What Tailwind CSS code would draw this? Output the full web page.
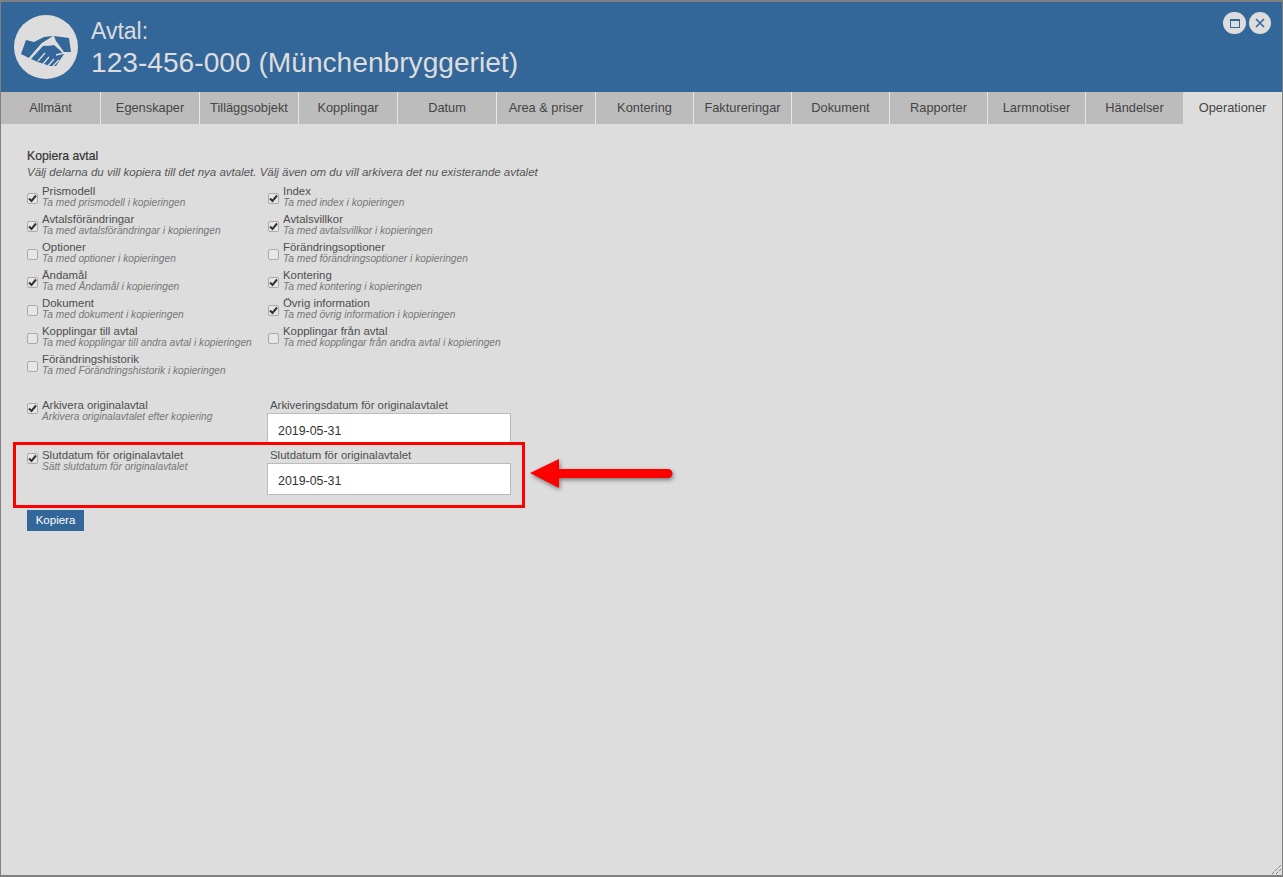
<!DOCTYPE html>
<html lang="en">
  <head>
    <meta charset="UTF-8" />
    <title>Avtal</title>
    <script src="https://cdn.jsdelivr.net/npm/@tailwindcss/browser@4"></script>
  </head>
  <body class="h-[877px] w-[1283px] overflow-hidden bg-[#dddddd] font-['Liberation_Sans',Arial,sans-serif]">
    <div class="relative flex h-[877px] flex-col border-x border-t-2 border-b-2 border-[#808080]">
      <!-- header -->
      <header class="relative flex h-[90px] shrink-0 items-start bg-[#336699] pl-[13px] pt-[13px]">
        <div class="flex h-[64px] w-[64px] items-center justify-center rounded-full bg-[#dddddd]">
          <svg viewBox="0 0 64 44" class="mt-[6px] h-[44px] w-[64px]" fill="#336699">
            <path d="M7 26 L12 12 L20 14 L30 9 L39 8 L28 15 L15 30 Z" />
            <path d="M40 8 L55 10 L57 24 L50 24 L42 13 Z" />
            <path d="M17 31 L29 18 L40 17 L50 26 L46 32 L42 38 L36 38 L30 36 L24 34 Z" />
            <path d="M15 31 L28 16 L38 11 L43 16 L33 17" fill="none" stroke="#dddddd" stroke-width="1.5" />
            <path d="M24 33 L31 25 M29 36 L35 29 M34 38 L40 31 M39 38 L45 32" fill="none" stroke="#dddddd" stroke-width="1.3" />
            <path d="M42 27 L50 25" fill="none" stroke="#dddddd" stroke-width="1.3" />
          </svg>
        </div>
        <div class="ml-[13px] text-[#dddddd]">
          <div class="mt-[3px] text-[23px] leading-[27px]">Avtal:</div>
          <div class="text-[28.15px] leading-[35px]">123-456-000 (Münchenbryggeriet)</div>
        </div>
        <div class="absolute right-[11px] top-[10px] flex gap-[3px]">
          <button class="flex h-[22px] w-[23px] items-center justify-center rounded-full bg-[#dddddd]">
            <span class="h-[9px] w-[10px] border border-t-2 border-[#336699]"></span>
          </button>
          <button class="flex h-[22px] w-[22px] items-center justify-center rounded-full bg-[#dddddd]">
            <svg viewBox="0 0 10 10" class="h-[10px] w-[10px]" stroke="#336699" stroke-width="1.6"><path d="M1 1 L9 9 M9 1 L1 9" /></svg>
          </button>
        </div>
      </header>

      <!-- tabs -->
      <nav class="flex h-[32px] shrink-0 text-[12.8px] text-[#444]">
        <a class="flex w-[100px] items-center justify-center border-r border-[#e8e8e8] bg-[#bcbcbc]">Allmänt</a>
        <a class="flex w-[99px] items-center justify-center border-r border-[#e8e8e8] bg-[#bcbcbc]">Egenskaper</a>
        <a class="flex w-[99px] items-center justify-center border-r border-[#e8e8e8] bg-[#bcbcbc]">Tilläggsobjekt</a>
        <a class="flex w-[99px] items-center justify-center border-r border-[#e8e8e8] bg-[#bcbcbc]">Kopplingar</a>
        <a class="flex w-[99px] items-center justify-center border-r border-[#e8e8e8] bg-[#bcbcbc]">Datum</a>
        <a class="flex w-[99px] items-center justify-center border-r border-[#e8e8e8] bg-[#bcbcbc]">Area &amp; priser</a>
        <a class="flex w-[98px] items-center justify-center border-r border-[#e8e8e8] bg-[#bcbcbc]">Kontering</a>
        <a class="flex w-[98px] items-center justify-center border-r border-[#e8e8e8] bg-[#bcbcbc]">Faktureringar</a>
        <a class="flex w-[98px] items-center justify-center border-r border-[#e8e8e8] bg-[#bcbcbc]">Dokument</a>
        <a class="flex w-[98px] items-center justify-center border-r border-[#e8e8e8] bg-[#bcbcbc]">Rapporter</a>
        <a class="flex w-[98px] items-center justify-center border-r border-[#e8e8e8] bg-[#bcbcbc]">Larmnotiser</a>
        <a class="flex w-[97px] items-center justify-center bg-[#bcbcbc]">Händelser</a>
        <a class="flex flex-1 items-center justify-center bg-[#dddddd]">Operationer</a>
      </nav>

      <!-- content -->
      <main class="flex-1 pl-[26px] pt-[25px] text-[#4d4d4d]">
        <h2 class="text-[12.2px] leading-[14px] font-medium text-[#333] [-webkit-text-stroke:0.2px_#333]">Kopiera avtal</h2>
        <p class="mt-[2px] text-[11.5px] leading-[14px] italic text-[#555]">Välj delarna du vill kopiera till det nya avtalet. Välj även om du vill arkivera det nu existerande avtalet</p>

        <div id="options" class="mt-[3px] grid grid-cols-[241px_1fr] auto-rows-[28px]"></div>

        <div class="mt-[16px] grid grid-cols-[240px_244px] auto-rows-[50px]">
          <label class="flex items-start pt-[6px]">
            <span class="relative mr-[4px] mt-[3px] flex h-[11px] w-[11px] shrink-0">
              <input type="checkbox" checked class="peer h-[11px] w-[11px] appearance-none rounded-[2px] border border-[#aaa] bg-[#e6e6e6]" />
              <svg class="absolute left-[1px] top-[1px] hidden peer-checked:block" width="9" height="9" viewBox="0 0 9 9" fill="none" stroke="#333" stroke-width="2"><path d="M1 4.5 L3.5 7 L8 1.5" /></svg>
            </span>
            <span class="block"><span class="block text-[11.4px] leading-[11px]">Arkivera originalavtal</span><span class="block text-[10.2px] leading-[11px] italic text-[#777]">Arkivera originalavtalet efter kopiering</span></span>
          </label>
          <div class="pt-[6px]">
            <div class="pl-[3px] text-[11.4px] leading-[11px]">Arkiveringsdatum för originalavtalet</div>
            <input value="2019-05-31" class="mt-[2px] h-[32px] w-full border border-[#bbb] bg-white px-[10px] pt-[3px] text-[12.4px] text-[#333]" />
          </div>
          <label class="flex items-start pt-[6px]">
            <span class="relative mr-[4px] mt-[3px] flex h-[11px] w-[11px] shrink-0">
              <input type="checkbox" checked class="peer h-[11px] w-[11px] appearance-none rounded-[2px] border border-[#aaa] bg-[#e6e6e6]" />
              <svg class="absolute left-[1px] top-[1px] hidden peer-checked:block" width="9" height="9" viewBox="0 0 9 9" fill="none" stroke="#333" stroke-width="2"><path d="M1 4.5 L3.5 7 L8 1.5" /></svg>
            </span>
            <span class="block"><span class="block text-[11.4px] leading-[11px]">Slutdatum för originalavtalet</span><span class="block text-[10.2px] leading-[11px] italic text-[#777]">Sätt slutdatum för originalavtalet</span></span>
          </label>
          <div class="pt-[6px]">
            <div class="pl-[3px] text-[11.4px] leading-[11px]">Slutdatum för originalavtalet</div>
            <input value="2019-05-31" class="mt-[2px] h-[32px] w-full border border-[#bbb] bg-white px-[10px] pt-[3px] text-[12.4px] text-[#333]" />
          </div>
        </div>

        <button class="mt-[16px] flex h-[21px] w-[57px] items-center justify-center bg-[#336699] text-[11.5px] text-white">Kopiera</button>
      </main>

      <!-- annotation over the form -->
      <div class="absolute left-[12px] top-[440px] h-[66px] w-[512px] border-[3px] border-[#ff0000]"></div>
      <svg class="absolute left-[526px] top-[456px]" width="152" height="38" viewBox="0 0 152 38">
        <path d="M3 15 L32 1 L32 11 L141 11 A4.5 4.5 0 0 1 141 20 L32 20 L32 30 Z" fill="#ff0000" style="filter: drop-shadow(1px 2px 2px rgba(0,0,0,.45))" />
      </svg>

      <!-- resize grip -->
      <svg class="absolute bottom-[1px] right-[1px]" width="9" height="9" viewBox="0 0 9 9" stroke="#555" stroke-dasharray="1 1"><path d="M0 9 L9 0 M4 9 L9 4" /></svg>
    </div>

    <script>
      const options = [
        ['Prismodell', 'Ta med prismodell i kopieringen', true],
        ['Index', 'Ta med index i kopieringen', true],
        ['Avtalsförändringar', 'Ta med avtalsförändringar i kopieringen', true],
        ['Avtalsvillkor', 'Ta med avtalsvillkor i kopieringen', true],
        ['Optioner', 'Ta med optioner i kopieringen', false],
        ['Förändringsoptioner', 'Ta med förändringsoptioner i kopieringen', false],
        ['Ändamål', 'Ta med Ändamål i kopieringen', true],
        ['Kontering', 'Ta med kontering i kopieringen', true],
        ['Dokument', 'Ta med dokument i kopieringen', false],
        ['Övrig information', 'Ta med övrig information i kopieringen', true],
        ['Kopplingar till avtal', 'Ta med kopplingar till andra avtal i kopieringen', false],
        ['Kopplingar från avtal', 'Ta med kopplingar från andra avtal i kopieringen', false],
        ['Förändringshistorik', 'Ta med Förändringshistorik i kopieringen', false],
      ]
      document.querySelector('#options').innerHTML = options
        .map(
          ([title, hint, checked]) => `
          <label class="flex items-start pt-[4px]">
            <span class="relative mr-[4px] mt-[7px] flex h-[11px] w-[11px] shrink-0">
              <input type="checkbox" ${checked ? 'checked' : ''} class="peer h-[11px] w-[11px] appearance-none rounded-[2px] border border-[#aaa] bg-[#e6e6e6]" />
              <svg class="absolute left-[1px] top-[1px] hidden peer-checked:block" width="9" height="9" viewBox="0 0 9 9" fill="none" stroke="#333" stroke-width="2"><path d="M1 4.5 L3.5 7 L8 1.5" /></svg>
            </span>
            <span class="block"><span class="block text-[11.4px] leading-[11px]">${title}</span><span class="block text-[10.2px] leading-[11px] italic text-[#777]">${hint}</span></span>
          </label>`
        )
        .join('')
    </script>
  </body>
</html>
